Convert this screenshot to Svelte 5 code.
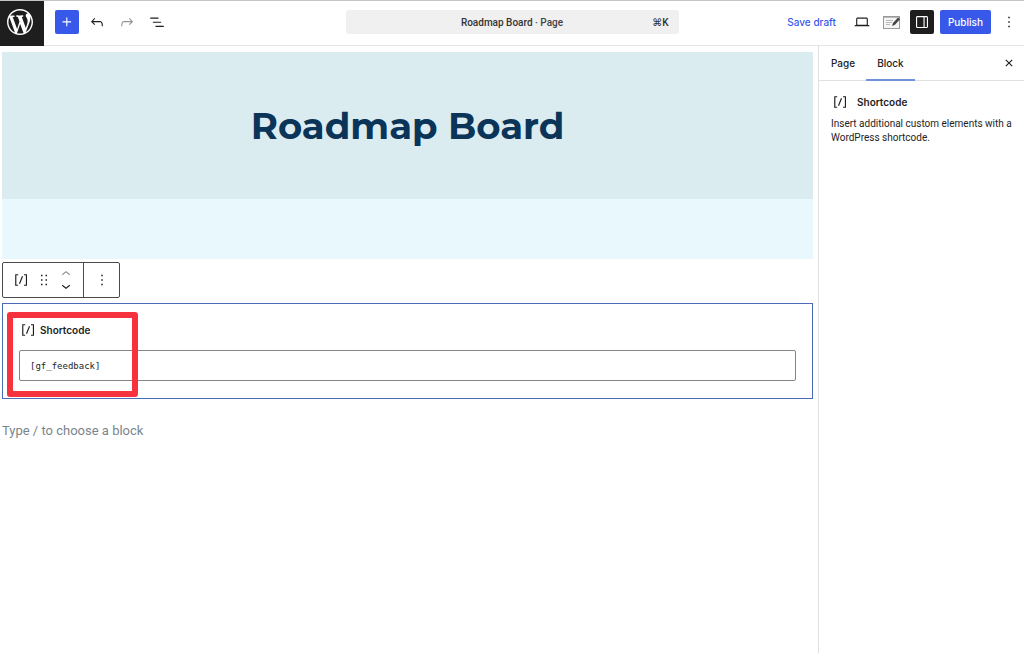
<script lang="ts">
	const icons = {
		plus: 'M11 12.5V17.5H12.5V12.5H17.5V11H12.5V6H11V11H6V12.5H11Z',
		undo: 'M18.3 11.7c-.6-.6-1.4-.9-2.3-.9H6.7l2.9-3.3-1.1-1-4.5 5L8.5 16l1-1-2.7-2.7H16c.5 0 .9.2 1.3.5 1 1 1 3.4 1 4.5v.3h1.5v-.2c0-1.5 0-4.3-1.5-5.7z',
		redo: 'M15.6 6.5l-1.1 1 2.9 3.3H8c-.9 0-1.7.3-2.3.9-1.4 1.5-1.4 4.2-1.4 5.6v.2h1.5v-.3c0-1.1 0-3.5 1-4.5.3-.3.7-.5 1.3-.5h9.2L14.5 15l1.1 1.1 4.6-4.6-4.6-5z',
		list: 'M3 6h11v1.5H3V6Zm3.5 5.5h11V13h-11v-1.5ZM21 17H10v1.5h11V17Z',
		desktop: 'M20.5 16h-.7V8c0-1.1-.9-2-2-2H6.2c-1.1 0-2 .9-2 2v8h-.7c-.8 0-1.5.7-1.5 1.5h20c0-.8-.7-1.5-1.5-1.5zM5.7 8c0-.3.2-.5.5-.5h11.6c.3 0 .5.2.5.5v7.6H5.7V8z',
		drawer: 'M18 4H6c-1.1 0-2 .9-2 2v12c0 1.1.9 2 2 2h12c1.1 0 2-.9 2-2V6c0-1.1-.9-2-2-2zm-4 14.5H6c-.3 0-.5-.2-.5-.5V6c0-.3.2-.5.5-.5h8v13zm4.5-.5c0 .3-.2.5-.5.5h-2.5v-13H18c.3 0 .5.2.5.5v12z',
		more: 'M13 19h-2v-2h2v2zm0-6h-2v-2h2v2zm0-6h-2V5h2v2z',
		shortcode: 'M16 4.2v1.5h2.5v12.5H16v1.5h4V4.2h-4zM4.2 19.8h4v-1.5H5.8V5.8h2.5V4.2h-4l-.1 15.6zm5.1-3.1l1.4.6 4-10-1.4-.6-4 10z',
		drag: 'M8 7h2V5H8v2zm0 6h2v-2H8v2zm0 6h2v-2H8v2zm6-14v2h2V5h-2zm0 8h2v-2h-2v2zm0 6h2v-2h-2v2z',
		up: 'M6.5 12.4L12 8l5.5 4.4-.9 1.2L12 10l-4.5 3.6-1-1.2z',
		down: 'M17.5 11.6L12 16l-5.5-4.4.9-1.2L12 14l4.5-3.6 1 1.2z',
		close: 'M12 13.06l3.712 3.713 1.061-1.06L13.061 12l3.712-3.712-1.06-1.06L12 10.938 8.288 7.227l-1.061 1.06L10.939 12l-3.712 3.712 1.06 1.061L12 13.061z',
	};

	let shortcode = $state('[gf_feedback]');
	let tab = $state('Block');
</script>

{#snippet icon(d: string)}
	<svg class="icon" viewBox="0 0 24 24" aria-hidden="true"><path {d} /></svg>
{/snippet}

<div class="editor">
	<header class="header">
		<div class="header-left">
			<a class="logo" href="#dashboard" aria-label="View Pages">
				<svg viewBox="0 0 20 20" aria-hidden="true">
					<path d="M20 10c0-5.51-4.49-10-10-10C4.48 0 0 4.49 0 10c0 5.52 4.48 10 10 10 5.51 0 10-4.48 10-10zM7.78 15.37L4.37 6.22c.55-.02 1.17-.08 1.17-.08.5-.06.44-1.13-.06-1.11 0 0-1.45.11-2.37.11-.18 0-.37 0-.58-.01C4.12 2.69 6.87 1.11 10 1.11c2.33 0 4.45.87 6.05 2.34-.68-.11-1.65.39-1.65 1.58 0 .74.45 1.36.9 2.1.35.61.55 1.36.55 2.46 0 1.49-1.4 5-1.4 5l-3.03-8.37c.54-.02.82-.17.82-.17.5-.05.44-1.25-.06-1.22 0 0-1.44.12-2.38.12-.87 0-2.33-.12-2.33-.12-.5-.03-.56 1.2-.06 1.22l.92.08 1.26 3.41zM17.41 10c.24-.64.74-1.87.43-4.25.7 1.29 1.05 2.71 1.05 4.25 0 3.29-1.73 6.24-4.4 7.78.97-2.59 1.94-5.2 2.92-7.78zM6.1 18.09C3.12 16.65 1.11 13.53 1.11 10c0-1.3.23-2.48.72-3.59C3.25 10.3 4.67 14.2 6.1 18.09zm4.03-6.63l2.58 6.98c-.86.29-1.76.45-2.71.45-.79 0-1.57-.11-2.29-.33.81-2.38 1.62-4.74 2.42-7.1z" />
				</svg>
			</a>
			<div class="tools">
				<button class="tool primary" aria-label="Toggle block inserter">{@render icon(icons.plus)}</button>
				<button class="tool" aria-label="Undo">{@render icon(icons.undo)}</button>
				<button class="tool" aria-label="Redo" disabled>{@render icon(icons.redo)}</button>
				<button class="tool" aria-label="Document overview">{@render icon(icons.list)}</button>
			</div>
		</div>

		<button class="document-bar">
			<span class="document-title">Roadmap Board <span class="document-type">· Page</span></span>
			<span class="shortcut">⌘K</span>
		</button>

		<div class="header-right">
			<button class="save">Save draft</button>
			<button class="tool" aria-label="View">{@render icon(icons.desktop)}</button>
			<button class="tool" aria-label="Page options">
				<svg class="note" viewBox="0 0 18 16" aria-hidden="true">
					<rect x="0.5" y="2.5" width="16" height="12" fill="#f4f4f4" stroke="#999" />
					<path d="M1 3.5h15" stroke="#bbb" />
					<path d="M3 6.5h7M3 8.5h6M3 10.5h4" stroke="#bbb" />
					<path d="M9 12l1-3 5-5.5 2 1.8-5 5.5z" fill="#444" />
				</svg>
			</button>
			<button class="tool pressed" aria-label="Settings" aria-pressed="true">{@render icon(icons.drawer)}</button>
			<button class="publish">Publish</button>
			<button class="tool" aria-label="Options">{@render icon(icons.more)}</button>
		</div>
	</header>

	<div class="body">
		<main class="canvas">
			<div class="hero">
				<h1>Roadmap Board</h1>
			</div>
			<div class="hero-band"></div>

			<div class="block-toolbar" role="toolbar" aria-label="Block tools">
				<div class="toolbar-group">
					<button class="block-tool" aria-label="Shortcode">{@render icon(icons.shortcode)}</button>
					<button class="block-tool" aria-label="Drag">{@render icon(icons.drag)}</button>
					<div class="movers">
						<button class="mover" aria-label="Move up" disabled>{@render icon(icons.up)}</button>
						<button class="mover" aria-label="Move down">{@render icon(icons.down)}</button>
					</div>
				</div>
				<div class="toolbar-group">
					<button class="block-tool" aria-label="More options">{@render icon(icons.more)}</button>
				</div>
			</div>

			<section class="shortcode-block">
				<label for="shortcode-input">{@render icon(icons.shortcode)}Shortcode</label>
				<input id="shortcode-input" type="text" bind:value={shortcode} spellcheck="false" />
				<div class="highlight"></div>
			</section>

			<p class="appender">Type / to choose a block</p>
		</main>

		<aside class="sidebar">
			<div class="tabs" role="tablist">
				{#each ['Page', 'Block'] as name}
					<button class="tab" class:active={tab === name} role="tab" aria-selected={tab === name} onclick={() => (tab = name)}>{name}</button>
				{/each}
				<button class="close" aria-label="Close Settings">{@render icon(icons.close)}</button>
			</div>
			<div class="block-card">
				<h2>{@render icon(icons.shortcode)}Shortcode</h2>
				<p>Insert additional custom elements with a WordPress shortcode.</p>
			</div>
		</aside>
	</div>
</div>

<style>
	:global(body) {
		margin: 0;
		background: #fff;
	}

	.editor {
		min-height: 100vh;
		display: flex;
		flex-direction: column;
		font-family: Inter, sans-serif;
		font-size: 10px;
		color: #1e1e1e;
	}

	.editor * {
		box-sizing: border-box;
	}

	button {
		display: flex;
		align-items: center;
		justify-content: center;
		padding: 0;
		border: 0;
		border-radius: 2px;
		background: none;
		color: inherit;
		font: inherit;
		cursor: pointer;
	}

	.icon {
		display: block;
		width: 18px;
		height: 18px;
		flex: none;
		fill: currentColor;
	}

	.header {
		display: grid;
		grid-template-columns: 1fr minmax(0, 333px) 1fr;
		height: 46px;
		border-top: 1px solid #c4c4c4;
		border-bottom: 1px solid #e4e4e4;
	}

	.header-left,
	.header-right {
		display: flex;
		align-items: flex-start;
	}

	.logo {
		display: flex;
		justify-content: center;
		width: 44px;
		height: 45px;
		padding: 8px 4px 0 0;
		background: #1e1e1e;
	}

	.logo svg {
		width: 26px;
		height: 26px;
		fill: #fff;
	}

	.tools {
		display: flex;
		gap: 6px;
		padding: 9px 0 0 11px;
	}

	.tool {
		width: 24px;
		height: 24px;
	}

	.tool:disabled {
		color: #949494;
	}

	.tool.primary,
	.publish {
		background: #3858e9;
		color: #fff;
	}

	.tool.pressed {
		background: #1e1e1e;
		color: #fff;
	}

	.note {
		width: 18px;
		height: 16px;
		fill: none;
	}

	.document-bar {
		display: grid;
		grid-template-columns: 1fr auto 1fr;
		height: 24px;
		margin-top: 9px;
		padding: 0 10px;
		border-radius: 3px;
		background: #f0f0f0;
		font-family: Roboto, Inter, sans-serif;
		font-weight: 500;
	}

	.document-title {
		grid-column: 2;
		color: #333;
	}

	.document-type {
		color: #444;
	}

	.shortcut {
		justify-self: end;
		color: #333;
	}

	.header-right {
		justify-content: flex-end;
		gap: 6px;
		padding: 9px 3px 0 0;
	}

	.save {
		height: 24px;
		margin-right: 8px;
		color: #3858e9;
		font-weight: 500;
	}

	.publish {
		height: 24px;
		padding: 0 8px;
		font-weight: 500;
	}

	.body {
		display: flex;
		flex: 1;
	}

	.canvas {
		flex: 1;
		min-width: 0;
		padding: 6px 5px 0 2px;
	}

	.hero {
		display: flex;
		align-items: center;
		justify-content: center;
		height: 147px;
		background: #dbecf1;
	}

	h1 {
		margin: 0;
		color: #0b3558;
		font-family: Montserrat, Inter, sans-serif;
		font-size: 37px;
		font-weight: 700;
		line-height: 48px;
	}

	.hero-band {
		height: 60px;
		background: #e9f8fd;
	}

	.block-toolbar {
		display: flex;
		width: fit-content;
		height: 36px;
		margin-top: 3px;
		border: 1px solid #4a4a4a;
		border-radius: 2px;
	}

	.toolbar-group {
		display: flex;
		align-items: center;
		padding: 0 6px;
	}

	.toolbar-group + .toolbar-group {
		border-left: 1px solid #4a4a4a;
	}

	.block-tool {
		width: 23px;
		height: 24px;
	}

	.movers {
		display: flex;
		flex-direction: column;
	}

	.mover {
		width: 22px;
		height: 12px;
		overflow: hidden;
	}

	.mover:disabled {
		color: #949494;
	}

	.shortcode-block {
		position: relative;
		margin-top: 5px;
		padding: 17px 16px;
		border: 1px solid #4a6cb8;
	}

	label {
		display: flex;
		align-items: center;
		gap: 3px;
		height: 18px;
		font-weight: 600;
	}

	#shortcode-input {
		display: block;
		width: 100%;
		height: 31px;
		margin-top: 11px;
		padding: 0 10px;
		border: 1px solid #858585;
		border-radius: 2px;
		background: #fff;
		color: #1e1e1e;
		font-family: 'DejaVu Sans Mono', monospace;
		font-size: 9px;
		line-height: 16px;
	}

	.highlight {
		position: absolute;
		top: 8px;
		left: 4px;
		width: 131px;
		height: 85px;
		border: 6px solid #f6323f;
		border-radius: 3px;
		pointer-events: none;
	}

	.appender {
		margin: 22px 0 0;
		color: #7a858c;
		font-family: Roboto, sans-serif;
		font-size: 13px;
		line-height: 20px;
	}

	.sidebar {
		width: 206px;
		flex: none;
		border-left: 1px solid #e0e0e0;
	}

	.tabs {
		display: flex;
		height: 35px;
		padding-left: 1px;
		border-bottom: 1px solid #e0e0e0;
	}

	.tab {
		height: 35px;
		padding: 0 11px;
		border-radius: 0;
		border-bottom: 2px solid transparent;
		font-weight: 500;
	}

	.tab.active {
		border-bottom-color: #6f93dc;
	}

	.close {
		width: 24px;
		margin-left: auto;
		margin-right: 3px;
	}

	.block-card {
		padding: 12px 8px 12px 12px;
	}

	h2 {
		display: flex;
		align-items: center;
		gap: 8px;
		margin: 0;
		font-size: 10px;
		font-weight: 600;
	}

	.block-card p {
		margin: 6px 0 0;
		font-family: Roboto, Inter, sans-serif;
		line-height: 14px;
	}
</style>
